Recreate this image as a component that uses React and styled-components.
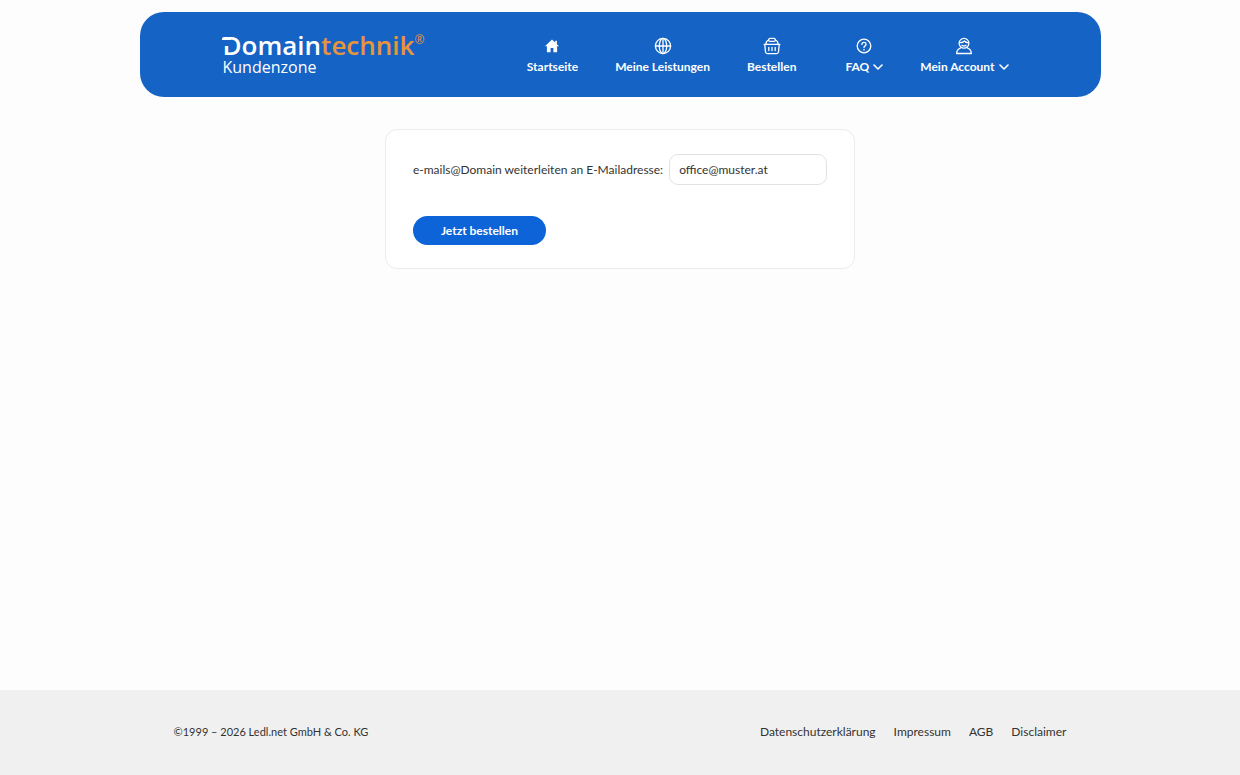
import React, { useState } from "react";
import styled, { createGlobalStyle } from "styled-components";

const menu = [
  { label: "Startseite", icon: "home" },
  { label: "Meine Leistungen", icon: "globe" },
  { label: "Bestellen", icon: "basket" },
];

const dropdowns = [
  { label: "FAQ", icon: "help" },
  { label: "Mein Account", icon: "user" },
];

const footerLinks = ["Datenschutzerklärung", "Impressum", "AGB", "Disclaimer"];

const icons = {
  home: (
    <path
      d="M9 2.5 2 9.2h1.9v6.1h3.7v-4.2h2.8v4.2h3.7V9.2H16L13.9 7.2V3.7h-1.7v1.8z"
      fill="currentColor"
      stroke="none"
    />
  ),
  globe: (
    <>
      <circle cx="9" cy="9" r="7.6" />
      <ellipse cx="9" cy="9" rx="3.7" ry="7.6" />
      <path d="M1.4 9h15.2M9 1.4v15.2" />
    </>
  ),
  basket: (
    <>
      <path d="M1.2 7.4h15.6M1.8 7.6l.7 7.2q.2 1.8 2 1.8h9q1.8 0 2-1.8l.7-7.2" />
      <path d="M2.9 7.2Q3 4 5.6 3M15.1 7.2Q15 4 12.4 3" />
      <rect x="5.6" y="1.4" width="6.8" height="3" rx="1.5" />
      <path d="M5.8 10.4v3.2M9 10.4v3.2M12.2 10.4v3.2" />
    </>
  ),
  help: (
    <>
      <circle cx="9" cy="9" r="6.8" />
      <path d="M6.9 7.4q.1-2 2.1-2t2.1 1.8q0 1-1.1 1.7-1 .6-1 1.5" />
      <path d="M9 12.4v.6" />
    </>
  ),
  user: (
    <>
      <circle cx="9" cy="6.3" r="4.9" />
      <path d="M4.6 5.6q3.2.2 4.8-1.6 1.4 1.6 4 1.8M7 8.2q2 1.6 4 0" />
      <path d="M5.7 10.8Q2 12 1.6 16.5h14.8q-.4-4.5-4.1-5.7" />
    </>
  ),
};

const NavItem = ({ label, icon, children }) => (
  <NavLink href="#">
    <NavIcon viewBox="0 0 18 18" aria-hidden="true">
      {icons[icon]}
    </NavIcon>
    <NavLabel>
      {label}
      {children}
    </NavLabel>
  </NavLink>
);

const App = () => {
  const [email, setEmail] = useState("office@muster.at");
  return (
    <Page>
      <GlobalStyle />
      <Header>
        <Logo href="#">
          <Brand>
            <span>Domain</span>
            <em>technik</em>
            <sup>®</sup>
          </Brand>
          <Zone>Kundenzone</Zone>
        </Logo>
        <Nav>
          <NavGroup>
            {menu.map((item) => (
              <NavItem key={item.label} {...item} />
            ))}
          </NavGroup>
          <NavGroup>
            {dropdowns.map((item) => (
              <NavItem key={item.label} {...item}>
                <Chevron viewBox="0 0 10 6" aria-hidden="true">
                  <path d="m1 1 4 4 4-4" />
                </Chevron>
              </NavItem>
            ))}
          </NavGroup>
        </Nav>
      </Header>
      <Main>
        <Card onSubmit={(e) => e.preventDefault()}>
          <Field>
            <label htmlFor="email">
              e-mails@Domain weiterleiten an E-Mailadresse:
            </label>
            <Input
              id="email"
              type="text"
              value={email}
              onChange={(e) => setEmail(e.target.value)}
            />
          </Field>
          <Button type="submit">Jetzt bestellen</Button>
        </Card>
      </Main>
      <Footer>
        <FooterInner>
          <Copyright>©1999 – 2026 Ledl.net GmbH &amp; Co. KG</Copyright>
          <FooterNav>
            {footerLinks.map((link) => (
              <a href="#" key={link}>
                {link}
              </a>
            ))}
          </FooterNav>
        </FooterInner>
      </Footer>
    </Page>
  );
};

const GlobalStyle = createGlobalStyle`
  * {
    box-sizing: border-box;
  }
  body {
    margin: 0;
    background: #fdfdfd;
    color: #333;
    font-family: Lato, "Liberation Sans", sans-serif;
    font-size: 12px;
    line-height: 20px;
  }
  a {
    color: inherit;
    text-decoration: none;
  }
`;

const Page = styled.div`
  display: flex;
  flex-direction: column;
  min-height: 100vh;
`;

const Header = styled.header`
  display: flex;
  align-items: flex-end;
  justify-content: space-between;
  width: 77.5%;
  margin: 12px auto 0;
  padding: 20px 92px 20px 82px;
  border-radius: 24px;
  background: #1563c5;
  color: #fff;
`;

const Logo = styled.a`
  display: flex;
  flex-direction: column;
  padding-left: 1px;
  font-family: "Open Sans", "Noto Sans", sans-serif;
`;

const Brand = styled.span`
  position: relative;
  display: flex;
  font-size: 26px;
  font-weight: 600;
  line-height: 26px;
  em {
    color: #e8953a;
    font-style: normal;
  }
  sup {
    color: #e8953a;
    font-size: 12px;
    font-weight: 400;
    line-height: 16px;
  }
  /* bar that reaches out of the D, cut off from its stem */
  &::before {
    content: "";
    position: absolute;
    top: 5px;
    left: -1px;
    width: 9px;
    height: 6px;
    border-top: 3px solid currentColor;
    border-top-left-radius: 2px;
    background: #1563c5;
  }
`;

const Zone = styled.span`
  font-size: 16px;
  line-height: 19px;
`;

const Nav = styled.nav`
  display: flex;
  gap: 49px;
`;

const NavGroup = styled.div`
  display: flex;
  gap: 37px;
`;

const NavLink = styled.a`
  display: flex;
  flex-direction: column;
  align-items: center;
  gap: 2px;
`;

const NavIcon = styled.svg`
  width: 18px;
  height: 18px;
  fill: none;
  stroke: currentColor;
  stroke-width: 1.3;
  stroke-linecap: round;
  stroke-linejoin: round;
`;

const NavLabel = styled.span`
  display: flex;
  align-items: center;
  gap: 4px;
  font-weight: 700;
  white-space: nowrap;
`;

const Chevron = styled.svg`
  width: 10px;
  height: 6px;
  fill: none;
  stroke: currentColor;
  stroke-width: 1.6;
  stroke-linecap: round;
  stroke-linejoin: round;
`;

const Main = styled.main`
  display: flex;
  flex: 1;
  align-items: flex-start;
  justify-content: center;
  padding: 32px 16px;
`;

const Card = styled.form`
  display: flex;
  flex-direction: column;
  align-items: flex-start;
  gap: 31px;
  padding: 24px 27px 23px;
  border: 1px solid #ececec;
  border-radius: 12px;
  background: #fff;
`;

const Field = styled.div`
  display: flex;
  align-items: center;
  gap: 6px;
`;

const Input = styled.input`
  width: 158px;
  height: 31px;
  padding: 0 9px;
  border: 1px solid #dfe3e4;
  border-radius: 9px;
  background: #fff;
  color: #333;
  font: inherit;
`;

const Button = styled.button`
  height: 29px;
  padding: 0 28px;
  border: 0;
  border-radius: 15px;
  background: #0d64d8;
  color: #fff;
  font: inherit;
  font-weight: 700;
  cursor: pointer;
`;

const Footer = styled.footer`
  padding: 32px 0 33px;
  background: #f0f0f0;
`;

const FooterInner = styled.div`
  display: flex;
  justify-content: space-between;
  width: 72%;
  margin: 0 auto;
`;

const Copyright = styled.span`
  font-size: 11px;
`;

const FooterNav = styled.nav`
  display: flex;
  gap: 18px;
`;

export default App;
